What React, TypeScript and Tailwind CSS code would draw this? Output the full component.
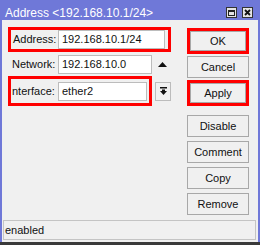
import React from "react";

const font = { fontFamily: '"Liberation Sans", Arial, sans-serif' };

function Btn({ label, red, cls }: { label: string; red?: boolean; cls: string }) {
  if (red) {
    return (
      <div className={"w-[62px] border-[3px] border-[#ff0000] " + cls}>
        <div className="h-[20px] border border-[#a8a8a8] bg-[#f0f0f0] flex items-center justify-center text-[11px] text-[#111]">
          {label}
        </div>
      </div>
    );
  }
  return (
    <div className={"w-[62px] h-[22px] border border-[#a8a8a8] bg-[#f0f0f0] flex items-center justify-center text-[11px] text-[#111] " + cls}>
      {label}
    </div>
  );
}

export default function App() {
  return (
    <div className="w-[260px] h-[245px] bg-[#6f78d8] flex flex-col" style={font}>
      <div className="h-[20px] shrink-0 flex items-center justify-between pl-[5px] pr-[7px] pt-[5px]">
        <span className="text-white text-[12px] leading-[14px]">Address &lt;192.168.10.1/24&gt;</span>
        <div className="flex gap-[5px]">
          <div className="w-[11px] h-[11px] bg-[#e4e4e4] border border-[#333] flex items-center justify-center">
            <div className="w-[7px] h-[6px] border border-[#222] border-t-2" />
          </div>
          <div className="w-[11px] h-[11px] bg-[#e4e4e4] border border-[#333] flex items-center justify-center">
            <svg width="7" height="7" viewBox="0 0 7 7"><path d="M1 1 L6 6 M6 1 L1 6" stroke="#111" strokeWidth="1.8" /></svg>
          </div>
        </div>
      </div>
      <div className="flex-1 bg-[#f0f0f0] flex flex-col mx-[2px]">
        <div className="flex-1 flex pt-[7px] pl-[6px]">
          <div className="w-[179px] flex flex-col">
            <div className="w-[163px] h-[25px] border-[3px] border-[#ff0000] flex items-center">
              <span className="w-[47px] pl-[2px] text-[11px] text-[#111]">Address:</span>
              <div className="w-[107px] h-[19px] bg-white border border-[#bcbcbc] flex items-center pl-[3px] text-[11px] text-[#111]">192.168.10.1/24</div>
            </div>
            <div className="h-[19px] flex items-center mt-[3px]">
              <span className="w-[50px] pl-[4px] text-[11px] text-[#111]">Network:</span>
              <div className="w-[94px] h-[19px] bg-white border border-[#bcbcbc] flex items-center pl-[3px] text-[11px] text-[#111]">192.168.10.0</div>
              <div className="w-[20px] flex justify-center">
                <svg width="9" height="5" viewBox="0 0 9 5"><path d="M0 5 L4.5 0 L9 5 Z" fill="#111" /></svg>
              </div>
            </div>
            <div className="h-[30px] flex items-center mt-[2px]">
              <div className="w-[144px] h-[30px] border-[3px] border-[#ff0000] flex items-center">
                <span className="w-[47px] pl-[1px] text-[11px] text-[#111]">nterface:</span>
                <div className="w-[89px] h-[19px] bg-white border border-[#bcbcbc] flex items-center pl-[3px] text-[11px] text-[#111]">ether2</div>
              </div>
              <div className="w-[16px] h-[19px] ml-[3px] bg-[#f0f0f0] border border-[#bcbcbc] flex items-center justify-center">
                <svg width="7" height="8" viewBox="0 0 7 8"><rect x="0" y="0" width="7" height="1.5" fill="#111" /><path d="M2 2.5 H5 V4 H7 L3.5 8 L0 4 H2 Z" fill="#111" /></svg>
              </div>
            </div>
          </div>
          <div className="w-[62px] flex flex-col pt-[1px]">
            <Btn label="OK" red cls="" />
            <Btn label="Cancel" cls="mt-[2px]" />
            <Btn label="Apply" red cls="mt-[2px]" />
            <Btn label="Disable" cls="mt-[9px]" />
            <Btn label="Comment" cls="mt-[4px]" />
            <Btn label="Copy" cls="mt-[4px]" />
            <Btn label="Remove" cls="mt-[4px]" />
          </div>
        </div>
        <div className="h-[20px] ml-[1px] mr-[2px] mb-[2px] border border-[#c4c4c4] flex items-center pl-[1px] text-[11px] text-[#111]">enabled</div>
      </div>
      <div className="h-[3px] bg-[#3a3a3a] shrink-0" />
    </div>
  );
}
